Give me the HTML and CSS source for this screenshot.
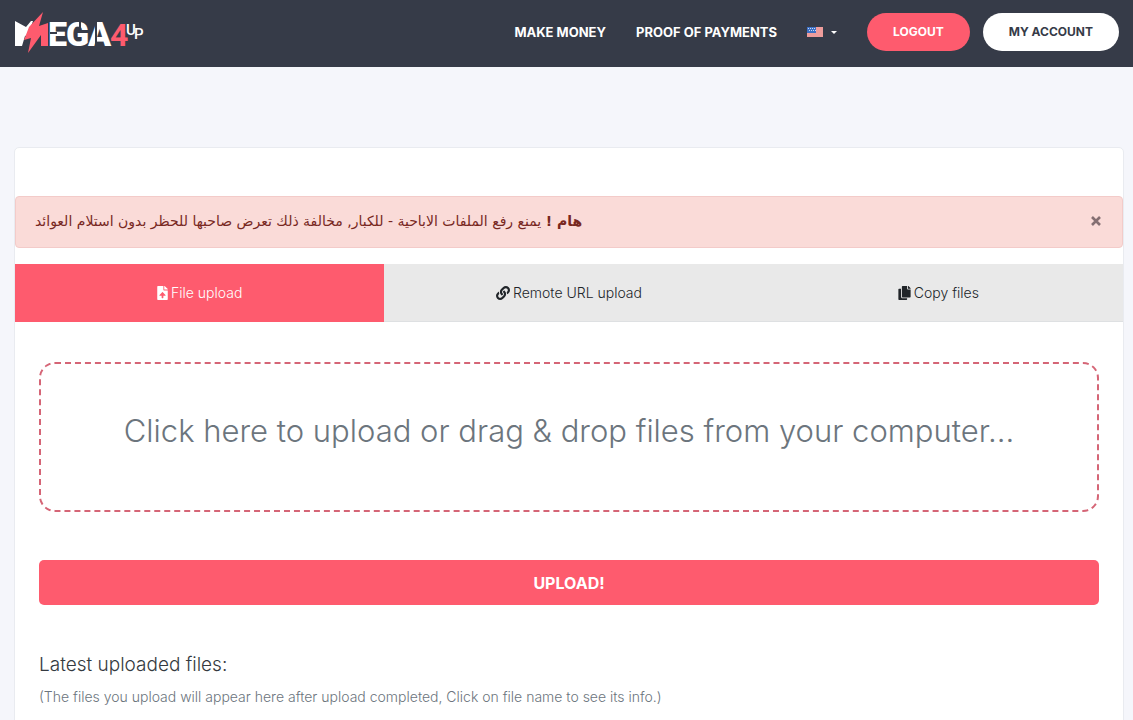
FILE: index.html
```html
<!DOCTYPE html>
<html lang="en">
<head>
<meta charset="utf-8">
<meta name="viewport" content="width=device-width, initial-scale=1">
<title>Mega4up - Upload files</title>
<link rel="stylesheet" href="styles.css">
</head>
<body>
<header class="topbar">
  <a class="logo" href="#" aria-label="MEGA4UP">
    <svg class="logo-art" viewBox="0 0 130 46" width="130" height="46">
      <g class="logo-word">
        <text x="3" y="37">M</text>
        <text x="34" y="37">E</text>
        <text x="52" y="37">G</text>
        <text x="74" y="37">A</text>
      </g>
      <path d="M36 24H43M66 12V20M82 12V38" stroke="#363b48" stroke-width="2"/>
      <path d="M0 11H35V38H0Z" fill="#363b48"/>
      <path d="M1 12L12 18L17 12H19L14 26L11 27L8 37H1Z" fill="#fff"/>
      <path d="M29 3L15 18L10 31L17 29L14 44L27 26V37H34V14L25 17Z" fill="#fe5b6e"/>
      <text class="logo-four" x="96" y="37">4</text>
      <text class="logo-up" x="112" y="26">U</text>
      <text class="logo-up" x="120" y="30">P</text>
    </svg>
  </a>
  <nav class="nav">
    <a class="nav-link" href="#">MAKE MONEY</a>
    <a class="nav-link" href="#">PROOF OF PAYMENTS</a>
    <button class="language" type="button" aria-label="Language: English">
      <svg width="16" height="10" viewBox="0 0 16 10">
        <path fill="#fbe9e9" d="M0 0H16V10H0z"/>
        <path d="M0 1H16M0 3H16M0 5H16M0 7H16M0 9H16" stroke="#e2504f"/>
        <path fill="#3d70c4" d="M0 0H9V6H0z"/>
        <path d="M1 1.5H9M2 3.5H9" stroke="#c9dcf7" stroke-dasharray="1 1"/>
      </svg>
      <svg width="6" height="3" viewBox="0 0 6 3"><path fill="#fff" d="M0 0H6L3 3z"/></svg>
    </button>
    <div class="account">
      <a class="pill pill-red" href="#">LOGOUT</a>
      <a class="pill pill-white" href="#">MY ACCOUNT</a>
    </div>
  </nav>
</header>

<main class="card">
  <div class="alert" role="alert">
    <p class="alert-text"><strong>هام !</strong> يمنع رفع الملفات الاباحية - للكبار, مخالفة ذلك تعرض صاحبها للحظر بدون استلام العوائد</p>
    <button class="close" type="button" aria-label="Close">
      <svg width="10" height="10" viewBox="0 0 10 10"><path d="M1 1L9 9M9 1L1 9" stroke="#846f72" stroke-width="2.6"/></svg>
    </button>
  </div>

  <div class="tabs" role="tablist">
    <button class="tab tab-active" type="button" role="tab" aria-selected="true">
      <svg width="11" height="14" viewBox="0 0 384 512"><path fill="currentColor" d="M224 136V0H24C11 0 0 11 0 24v464c0 13 11 24 24 24h336c13 0 24-11 24-24V160H248c-13 0-24-11-24-24zm65 216h-65v80c0 9-7 16-16 16h-32c-9 0-16-7-16-16v-80H95c-14 0-21-17-11-27l96-96c7-7 17-7 24 0l96 96c10 10 3 27-11 27zM377 105L279 7c-4-4-11-7-17-7h-6v128h128v-6c0-6-2-12-7-17z"/></svg>
      File upload
    </button>
    <button class="tab" type="button" role="tab" aria-selected="false">
      <svg width="14" height="14" viewBox="0 0 512 512"><path fill="currentColor" d="M326.612 185.391c59.747 59.809 58.927 155.698.36 214.59-.11.12-.24.25-.36.37l-67.2 67.2c-59.27 59.27-155.699 59.262-214.96 0-59.27-59.26-59.27-155.7 0-214.96l37.106-37.106c9.84-9.84 26.786-3.3 27.294 10.606.648 17.722 3.826 35.527 9.69 52.721 1.986 5.822.567 12.262-3.783 16.612l-13.087 13.087c-28.026 28.026-28.905 73.66-1.155 101.96 28.024 28.579 74.086 28.749 102.325.51l67.2-67.19c28.191-28.191 28.073-73.757 0-101.83-3.701-3.694-7.429-6.564-10.341-8.569a16.037 16.037 0 0 1-6.947-12.606c-.396-10.567 3.348-21.456 11.698-29.806l21.054-21.055c5.521-5.521 14.182-6.199 20.584-1.731a152.482 152.482 0 0 1 20.522 17.197zM467.547 44.449c-59.261-59.262-155.69-59.27-214.96 0l-67.2 67.2c-.12.12-.25.25-.36.37-58.566 58.892-59.387 154.781.36 214.59a152.454 152.454 0 0 0 20.521 17.196c6.402 4.468 15.064 3.789 20.584-1.731l21.054-21.055c8.35-8.35 12.094-19.239 11.698-29.806a16.037 16.037 0 0 0-6.947-12.606c-2.912-2.005-6.64-4.875-10.341-8.569-28.073-28.073-28.191-73.639 0-101.83l67.2-67.19c28.239-28.239 74.3-28.069 102.325.51 27.75 28.3 26.872 73.934-1.155 101.96l-13.087 13.087c-4.35 4.35-5.769 10.79-3.783 16.612 5.864 17.194 9.042 34.999 9.69 52.721.509 13.906 17.454 20.446 27.294 10.606l37.106-37.106c59.271-59.259 59.271-155.699.001-214.959z"/></svg>
      Remote URL upload
    </button>
    <button class="tab" type="button" role="tab" aria-selected="false">
      <svg width="13" height="14" viewBox="0 0 448 512"><path fill="currentColor" d="M320 448v40c0 13-11 24-24 24H24c-13 0-24-11-24-24V120c0-13 11-24 24-24h72v296c0 31 25 56 56 56zm0-344V0H152c-13 0-24 11-24 24v368c0 13 11 24 24 24h272c13 0 24-11 24-24V128H344c-13 0-24-11-24-24zm121-31L375 7c-4-4-11-7-17-7h-6v96h96v-6c0-6-2-12-7-17z"/></svg>
      Copy files
    </button>
  </div>

  <section class="panel">
    <button class="dropzone" type="button">Click here to upload or drag &amp; drop files from your computer...</button>
    <button class="upload" type="button">UPLOAD!</button>
    <h2 class="latest">Latest uploaded files:</h2>
    <p class="hint">(The files you upload will appear here after upload completed, Click on file name to see its info.)</p>
  </section>
</main>
</body>
</html>
```
FILE: styles.css
```css
* {
  box-sizing: border-box;
}

body {
  margin: 0;
  background: #f5f6fb;
  color: #343a40;
  font-family: Inter, "Open Sans", sans-serif;
  font-size: 14px;
  font-weight: 300;
}

button {
  border: 0;
  padding: 0;
  background: none;
  color: inherit;
  font: inherit;
  cursor: pointer;
}

a {
  color: inherit;
  text-decoration: none;
}

.topbar {
  display: flex;
  align-items: center;
  justify-content: space-between;
  padding: 13px 14px 16px;
  background: #363b48;
  color: #fff;
}

.logo {
  display: flex;
  height: 38px;
  align-items: center;
}

.logo-art {
  overflow: visible;
  font-family: Roboto, sans-serif;
}

.logo-word {
  fill: #fff;
  font-size: 34px;
  font-weight: 900;
}

.logo-four {
  fill: #fe5b6e;
  font-size: 32px;
  font-weight: 700;
}

.logo-up {
  fill: #fff;
  font-size: 15px;
  font-weight: 500;
}

.nav {
  display: flex;
  align-items: center;
  gap: 30px;
  font-size: 13px;
  font-weight: 700;
}

.language {
  display: flex;
  align-items: center;
  gap: 8px;
}

.account {
  display: flex;
  gap: 13px;
}

.pill {
  padding: 0 26px;
  border-radius: 20px;
  font-size: 12px;
  line-height: 38px;
}

.pill-red {
  background: #fe5b6e;
}

.pill-white {
  background: #fff;
  color: #363b48;
}

.card {
  margin: 80px 9px 0 14px;
  padding-top: 48px;
  border: 1px solid #e9ebf0;
  border-radius: 5px;
  background: #fff;
}

.alert {
  display: flex;
  align-items: center;
  justify-content: space-between;
  height: 52px;
  padding: 0 21px 2px 19px;
  border: 1px solid #f3cbc9;
  border-radius: 4px;
  background: #fadbd8;
  color: #78281f;
}

.alert-text {
  margin: 0;
  font-family: "DejaVu Sans", sans-serif;
  font-size: 14px;
  font-weight: 400;
}

.close {
  display: flex;
}

.tabs {
  display: grid;
  grid-template-columns: repeat(3, 1fr);
  margin-top: 16px;
}

.tab {
  display: flex;
  align-items: center;
  justify-content: center;
  gap: 3px;
  height: 58px;
  border-bottom: 1px solid #dee0e2;
  background: #e9e9e9;
  color: #212529;
}

.tab-active {
  border-color: #fe5b6e;
  background: #fe5b6e;
  color: #fff;
}

.panel {
  display: flex;
  flex-direction: column;
  padding: 40px 24px 48px;
}

.dropzone {
  height: 150px;
  padding-bottom: 14px;
  border: 2px dashed #d56576;
  border-radius: 16px;
  color: #6c757d;
  font-size: 31px;
}

.upload {
  height: 45px;
  margin-top: 48px;
  border-radius: 5px;
  background: #fe5b6e;
  color: #fff;
  font-size: 16px;
  font-weight: 700;
}

.latest {
  margin: 48px 0 0;
  font-size: 19px;
  font-weight: 300;
  line-height: 24px;
}

.hint {
  margin: 10px 0 0;
  color: #6c757d;
  font-size: 14px;
  line-height: 20px;
}
```
